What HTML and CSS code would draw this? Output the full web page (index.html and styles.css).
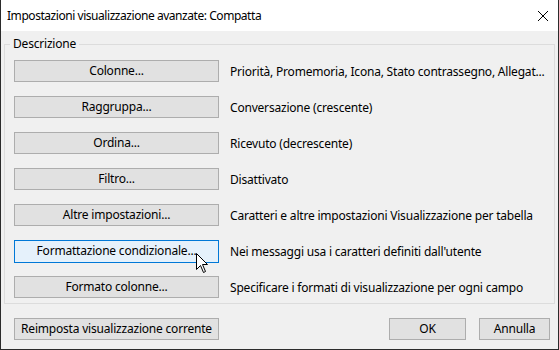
FILE: index.html
```html
<!DOCTYPE html>
<html>
<head>
    <title>Impostazioni visualizzazione avanzate</title>
    <link rel="stylesheet" href="styles.css">
</head>
<body>
<div class="dialog">
    <div class="titlebar">
        <span class="title">Impostazioni visualizzazione avanzate: Compatta</span>
        <svg class="close" width="12" height="12" viewBox="0 0 12 12">
            <path d="M1 1 L11 11 M11 1 L1 11" stroke="#000" stroke-width="1" fill="none"/>
        </svg>
    </div>
    <div class="content">
        <fieldset class="group">
            <legend>Descrizione</legend>
            <div class="row">
                <button class="btn wide">Colonne...</button>
                <span class="desc">Priorità, Promemoria, Icona, Stato contrassegno, Allegat...</span>
            </div>
            <div class="row">
                <button class="btn wide">Raggruppa...</button>
                <span class="desc">Conversazione (crescente)</span>
            </div>
            <div class="row">
                <button class="btn wide">Ordina...</button>
                <span class="desc">Ricevuto (decrescente)</span>
            </div>
            <div class="row">
                <button class="btn wide">Filtro...</button>
                <span class="desc">Disattivato</span>
            </div>
            <div class="row">
                <button class="btn wide">Altre impostazioni...</button>
                <span class="desc">Caratteri e altre impostazioni Visualizzazione per tabella</span>
            </div>
            <div class="row">
                <button class="btn wide hover">Formattazione condizionale...</button>
                <span class="desc">Nei messaggi usa i caratteri definiti dall'utente</span>
            </div>
            <div class="row">
                <button class="btn wide">Formato colonne...</button>
                <span class="desc">Specificare i formati di visualizzazione per ogni campo</span>
            </div>
        </fieldset>
        <div class="footer">
            <button class="btn wide">Reimposta visualizzazione corrente</button>
            <div class="spacer"></div>
            <button class="btn ok">OK</button>
            <button class="btn cancel">Annulla</button>
        </div>
    </div>
    <svg class="cursor" width="13" height="21" viewBox="0 0 13 21">
        <path d="M0.5 0.5 L0.5 16.5 L4.5 12.5 L7.5 19.5 L9.5 18.5 L6.5 11.5 L11.5 11.5 Z" fill="#fff" stroke="#000" stroke-width="1" stroke-linejoin="miter"/>
    </svg>
</div>
</body>
</html>
```
FILE: styles.css
```css
body {
  margin: 0;
  font-family: "Noto Sans", "Open Sans", sans-serif;
  font-size: 12px;
  letter-spacing: -0.2px;
  color: #000;
}

.dialog {
  position: relative;
  width: 559px;
  height: 350px;
  box-sizing: border-box;
  border-left: 1px solid #2b2b2b;
  border-right: 1px solid #2b2b2b;
  border-bottom: 1px solid #2b2b2b;
  background: #f0f0f0;
  display: flex;
  flex-direction: column;
}

.titlebar {
  height: 31px;
  background: #fff;
  display: flex;
  align-items: center;
  justify-content: space-between;
  padding: 0 9px 0 6px;
}

.title {
  margin-top: -1px;
  letter-spacing: -0.45px;
}

.close {
  display: block;
}

.content {
  padding: 0 8px 0 3px;
}

.group {
  margin: 5px 0 0 0;
  padding: 8px 0 5px 9px;
  border: 1px solid #dcdcdc;
  width: 551px;
  box-sizing: border-box;
  display: flex;
  flex-direction: column;
  gap: 14px;
}

.group legend {
  margin-left: -4px;
  padding: 0 3px;
  line-height: 16px;
}

.row {
  display: flex;
  align-items: center;
  height: 22px;
}

.btn {
  font-family: inherit;
  font-size: 12px;
  letter-spacing: -0.2px;
  color: #000;
  height: 22px;
  padding: 0;
  background: #e1e1e1;
  border: 1px solid #adadad;
  box-sizing: border-box;
  line-height: 18px;
}

.btn.wide {
  width: 205px;
}

.btn.hover {
  background: #e5f1fb;
  border-color: #0078d7;
  height: 23px;
}

.desc {
  margin-left: 11px;
  white-space: nowrap;
}

.footer {
  display: flex;
  margin-top: 14px;
  padding-left: 10px;
}

.spacer {
  flex: 1;
}

.btn.ok {
  width: 77px;
}

.btn.cancel {
  width: 71px;
  margin-left: 13px;
}

.cursor {
  position: absolute;
  left: 195px;
  top: 253px;
}
```
